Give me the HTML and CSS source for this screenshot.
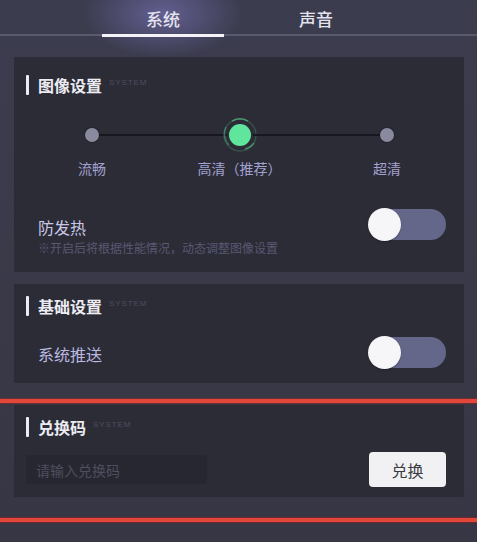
FILE: index.html
```html
<!DOCTYPE html>
<html lang="zh-CN">
<head>
<meta charset="utf-8">
<title>设置</title>
<link rel="stylesheet" href="styles.css">
</head>
<body>
<div class="page">
  <nav class="tabs">
    <div class="tab active">系统</div>
    <div class="tab">声音</div>
  </nav>
  <main class="content">
    <section class="panel panel-image">
      <div class="title-row">
        <span class="bar"></span>
        <h2 class="title">图像设置</h2>
        <span class="tag">SYSTEM</span>
      </div>
      <div class="slider">
        <span class="dot"></span>
        <span class="line"></span>
        <span class="dot-on">
          <svg class="ring" width="34" height="34" viewBox="0 0 34 34">
            <circle cx="17" cy="17" r="16" fill="none" stroke="rgba(90,220,150,0.22)" stroke-width="1.5"/>
            <path d="M9 3.1 A16 16 0 0 1 25 3.1" fill="none" stroke="rgba(110,235,165,0.45)" stroke-width="1.6"/>
            <path d="M31 25 A16 16 0 0 1 22 31" fill="none" stroke="rgba(110,235,165,0.4)" stroke-width="1.6"/>
            <path d="M3 9 A16 16 0 0 0 6 27" fill="none" stroke="rgba(110,235,165,0.3)" stroke-width="1.6"/>
            <circle cx="17" cy="17" r="11" fill="#5fe59c"/>
          </svg>
        </span>
        <span class="line"></span>
        <span class="dot"></span>
        <span class="label l1">流畅</span>
        <span class="label l2">高清（推荐）</span>
        <span class="label l3">超清</span>
      </div>
      <div class="row row-heat">
        <div class="texts">
          <div class="name">防发热</div>
          <div class="sub">※开启后将根据性能情况，动态调整图像设置</div>
        </div>
        <div class="toggle toggle-heat"><span class="knob"></span></div>
      </div>
    </section>

    <section class="panel panel-basic">
      <div class="title-row">
        <span class="bar"></span>
        <h2 class="title">基础设置</h2>
        <span class="tag">SYSTEM</span>
      </div>
      <div class="row row-push">
        <div class="name push-name">系统推送</div>
        <div class="toggle"><span class="knob"></span></div>
      </div>
    </section>
  </main>

  <div class="redline first"></div>

  <main class="content">
    <section class="panel panel-code">
      <div class="title-row">
        <span class="bar"></span>
        <h2 class="title">兑换码</h2>
        <span class="tag">SYSTEM</span>
      </div>
      <div class="row row-code">
        <input class="code-input" type="text" placeholder="请输入兑换码">
        <button class="btn" type="button">兑换</button>
      </div>
    </section>
  </main>

  <div class="redline second"></div>
</div>
</body>
</html>
```

FILE: styles.css
```css
* { box-sizing: border-box; }

html, body {
  margin: 0;
  padding: 0;
}

body {
  width: 477px;
  height: 542px;
  overflow: hidden;
  font-family: "Noto Sans CJK SC", "Noto Sans", sans-serif;
  background: #383847;
}

.page {
  width: 477px;
  height: 542px;
  background:
    radial-gradient(ellipse 80px 44px at 163px 14px, rgba(125, 118, 190, 0.6), rgba(125, 118, 190, 0) 100%),
    linear-gradient(180deg, #3c3c4f 0%, #3a3a4a 40%, #363644 100%);
}

.tabs {
  display: flex;
  gap: 31px;
  padding-left: 102px;
  height: 36px;
  border-bottom: 2px solid #5a5a6e;
}

.tab {
  width: 122px;
  height: 36px;
  padding-top: 7px;
  text-align: center;
  font-size: 17px;
  line-height: 24px;
  font-weight: 500;
  color: #e4e4ee;
}

.tab.active {
  border-bottom: 3px solid #f4f4f8;
  height: 37px;
}

.content {
  padding: 0 13px 0 14px;
}

.panel {
  background: #2c2c37;
  border-radius: 1px;
}

.panel-image {
  margin-top: 21px;
  padding: 18px 18px 16px 12px;
}

.panel-basic {
  margin-top: 12px;
  padding: 12px 18px 15px 12px;
}

.panel-code {
  margin-top: 2px;
  padding: 12px 18px 10px 12px;
}

.title-row {
  display: flex;
  align-items: flex-start;
  height: 20px;
}

.bar {
  width: 3px;
  height: 20px;
  background: #ececf2;
  border-radius: 1px;
  margin-right: 9px;
}

.title {
  margin: 0;
  font-size: 16px;
  line-height: 20px;
  font-weight: 700;
  color: #ececf2;
}

.tag {
  margin-left: 7px;
  margin-top: 3px;
  font-family: "Liberation Sans", sans-serif;
  font-size: 8px;
  line-height: 10px;
  letter-spacing: 0.9px;
  color: #4d4d5e;
}

/* slider */
.slider {
  display: grid;
  grid-template-columns: 14px 1fr 34px 1fr 14px;
  grid-template-rows: 34px 20px;
  row-gap: 6px;
  align-items: center;
  width: 309px;
  margin: 23px 0 0 59px;
}

.dot {
  width: 14px;
  height: 14px;
  border-radius: 50%;
  background: #8a8a9f;
  box-shadow: 0 0 0 1px rgba(20, 20, 28, 0.35);
  position: relative;
  z-index: 1;
}

.line {
  height: 2px;
  background: #17171f;
  margin: 0 -4px;
}

.dot-on {
  width: 34px;
  height: 34px;
  display: flex;
}

.ring { display: block; }

.label {
  grid-row: 2;
  display: flex;
  justify-content: center;
  white-space: nowrap;
  font-size: 14px;
  line-height: 20px;
  color: #a2a2d0;
}

.l1 { grid-column: 1; }
.l2 { grid-column: 3; }
.l3 { grid-column: 5; }

/* rows */
.row {
  display: flex;
  justify-content: space-between;
}

.row-heat {
  margin-top: 38px;
  align-items: flex-start;
  padding-left: 12px;
}

.name {
  font-size: 16px;
  line-height: 22px;
  color: #c9c9e6;
}

.sub {
  margin-top: 2px;
  font-size: 12px;
  line-height: 16px;
  color: #585872;
}

.toggle {
  width: 77px;
  height: 31px;
  border-radius: 16px;
  background: #646789;
  display: flex;
  align-items: center;
}

.toggle-heat {
  margin-top: -7px;
}

.knob {
  width: 33px;
  height: 33px;
  border-radius: 50%;
  background: #f6f6f8;
  margin-left: -1px;
  box-shadow: 0 1px 2px rgba(0, 0, 0, 0.25);
}

.row-push {
  margin-top: 21px;
  align-items: center;
  padding-left: 12px;
}

.push-name {
  padding-top: 3px;
  color: #babae0;
}

.redline {
  height: 4px;
  background: #e3473a;
  box-shadow: 0 0 1px 1px rgba(140, 40, 35, 0.55);
}

.redline.first { margin-top: 16px; }
.redline.second { margin-top: 21px; }

.row-code {
  margin-top: 15px;
  align-items: center;
}

.code-input {
  width: 181px;
  height: 29px;
  border: none;
  outline: none;
  border-radius: 3px;
  background: #272731;
  padding: 0 0 0 10px;
  font-family: "Noto Sans CJK SC", "Noto Sans", sans-serif;
  font-size: 14px;
  color: #c9c9e6;
}

.code-input::placeholder {
  color: #4e4e5e;
}

.btn {
  width: 77px;
  height: 35px;
  border: none;
  border-radius: 4px;
  background: #f1f1f3;
  font-family: "Noto Sans CJK SC", "Noto Sans", sans-serif;
  font-size: 16px;
  color: #3c3c40;
  padding: 0;
}
```
